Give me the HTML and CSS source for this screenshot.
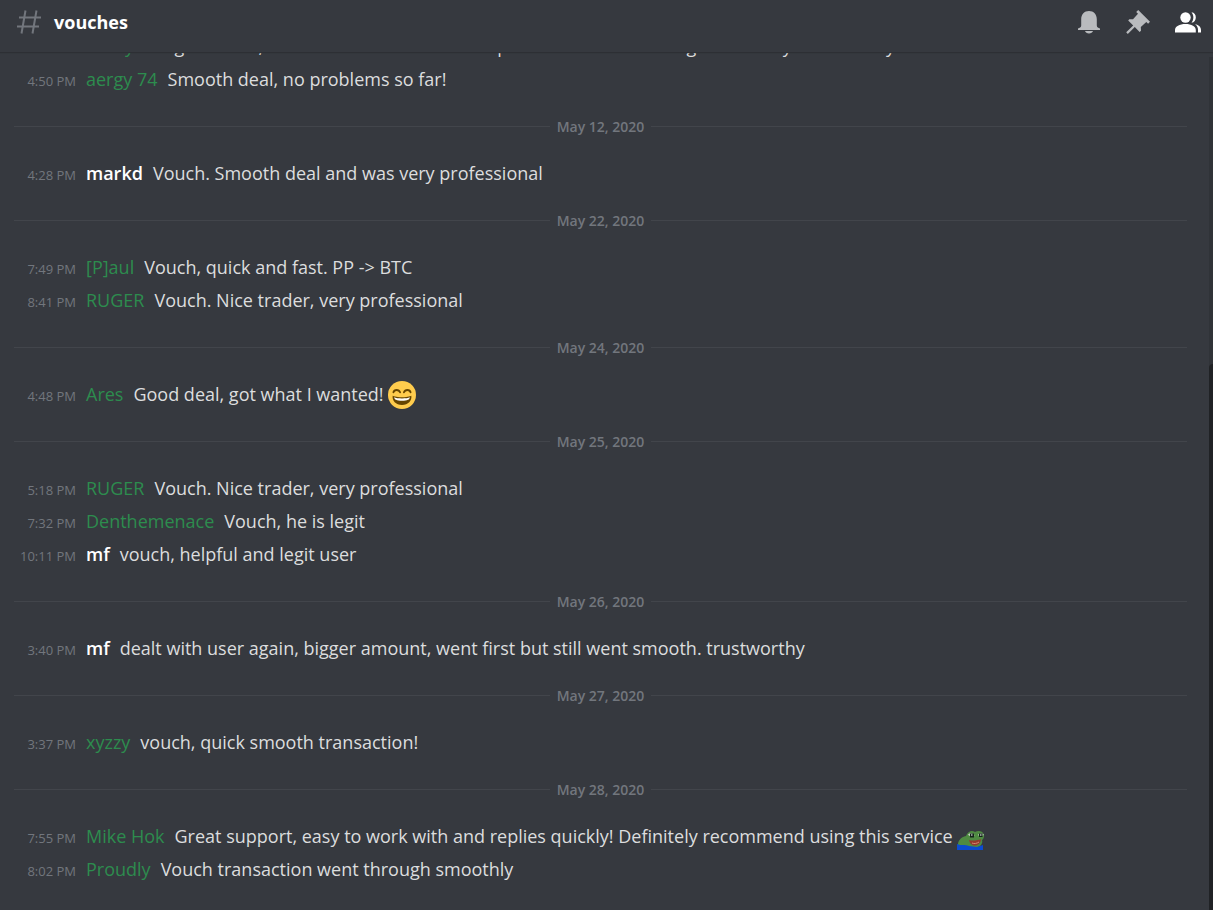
FILE: index.html
```html
<!DOCTYPE html>
<html lang="en">
<head>
<meta charset="utf-8">
<title>vouches</title>
<link rel="stylesheet" href="styles.css">
</head>
<body>
<header class="topbar">
  <svg class="hash" viewBox="0 0 26 26" aria-hidden="true"><path d="M9.5 1.5 5.5 24.500M20.500 1.500 16.500 24.500M3 8.500H25M1 17.500H23"/></svg>
  <h1 class="title">vouches</h1>
  <div class="tools">
    <button class="tool" type="button" aria-label="Notifications"><svg viewBox="0 0 24 24"><path d="M12 1C7.300 1 4.200 4.500 4.200 9.200V15.500C4.200 17.500 2.500 18 1 18.500V20H23V18.500C21.500 18 19.800 17.500 19.800 15.500V9.200C19.800 4.500 16.700 1 12 1ZM8 21C8.500 22.500 10 23.500 12 23.500S15.500 22.500 16 21Z"/></svg></button>
    <button class="tool" type="button" aria-label="Pinned messages"><svg viewBox="0 0 24 24"><path d="M12.200 0 10.200 2 12 3.800 7 9.300 3.300 9.200 2.200 10.400 7.200 15.500.2 22.200 1.800 23.900 8.800 17.100 13.600 22 15 20.700 14.800 17 20.300 12 22.100 13.800 24 11.800Z"/></svg></button>
    <button class="tool active" type="button" aria-label="Member list"><svg viewBox="0 0 26 24"><circle cx="10.500" cy="7.500" r="5.200"/><path d="M0 22.500V20C0 16.500 4.500 14 10.500 14S20.800 16.500 20.800 20V22.500ZM16.500 2.300C22.300 2.300 22.300 12.700 16.500 12.700C19 9.800 19 5.200 16.500 2.300ZM20 14C24 15 26 17 26 20V22.500H23V20C23 17.500 22 15.500 20 14Z"/></svg></button>
  </div>
</header>
<main class="chat">
  <div class="log">
    <article class="msg"><time class="time">4:46 PM</time><b class="name">Mattyson</b><p class="text">great deal, smooth transaction and so patient and was dealing with a very trustworthy</p></article>
    <article class="msg"><time class="time">4:50 PM</time><b class="name">aergy 74</b><p class="text">Smooth deal, no problems so far!</p></article>
    <div class="day">May 12, 2020</div>
    <article class="msg"><time class="time">4:28 PM</time><b class="name plain">markd</b><p class="text">Vouch. Smooth deal and was very professional</p></article>
    <div class="day">May 22, 2020</div>
    <article class="msg"><time class="time">7:49 PM</time><b class="name">[P]aul</b><p class="text">Vouch, quick and fast. PP -&gt; BTC</p></article>
    <article class="msg"><time class="time">8:41 PM</time><b class="name">RUGER</b><p class="text">Vouch. Nice trader, very professional</p></article>
    <div class="day">May 24, 2020</div>
    <article class="msg"><time class="time">4:48 PM</time><b class="name">Ares</b><p class="text">Good deal, got what I wanted!</p>
      <svg class="emoji" viewBox="0 0 36 36" role="img" aria-label="Grinning face"><circle cx="18" cy="18" r="18" fill="#ffcc4d"/><path d="M6 19C6 19 10 21 18 21S30 19 30 19C31 25 26 31 18 31S5 25 6 19Z" fill="#664500"/><path d="M8 21C11 23 25 23 28 21C28 24 25 25.500 18 25.500S8 24 8 21Z" fill="#fff"/><path d="M7 14.500C8 10.500 14 10.500 15.500 14.500M20.500 14.500C22 10.500 28 10.500 29 14.500" fill="none" stroke="#664500" stroke-width="2.400" stroke-linecap="round"/></svg></article>
    <div class="day">May 25, 2020</div>
    <article class="msg"><time class="time">5:18 PM</time><b class="name">RUGER</b><p class="text">Vouch. Nice trader, very professional</p></article>
    <article class="msg"><time class="time">7:32 PM</time><b class="name">Denthemenace</b><p class="text">Vouch, he is legit</p></article>
    <article class="msg"><time class="time">10:11 PM</time><b class="name plain">mf</b><p class="text">vouch, helpful and legit user</p></article>
    <div class="day">May 26, 2020</div>
    <article class="msg"><time class="time">3:40 PM</time><b class="name plain">mf</b><p class="text">dealt with user again, bigger amount, went first but still went smooth. trustworthy</p></article>
    <div class="day">May 27, 2020</div>
    <article class="msg"><time class="time">3:37 PM</time><b class="name">xyzzy</b><p class="text">vouch, quick smooth transaction!</p></article>
    <div class="day">May 28, 2020</div>
    <article class="msg"><time class="time">7:55 PM</time><b class="name">Mike Hok</b><p class="text">Great support, easy to work with and replies quickly! Definitely recommend using this service</p>
      <svg class="emoji" viewBox="0 0 28 28" role="img" aria-label="Smiling frog"><path d="M1 24C0 18 4 14 9 13C11 8 15 7 18 9C21 7 25 8 26 10C28 12 27 16 25 17C26 20 24 23 21 24Z" fill="#4f8a42"/><path d="M0 21C4 23 8 21 12 23L20 24 26 22V27H0Z" fill="#0b4bd0"/><path d="M11 11.500C13 9.500 17 10 17.500 12.500C16 14 13 14 11 11.500ZM21 12C22 10 26 10 27 12C25 13.500 22 13.500 21 12Z" fill="#c3cfc3"/><path d="M13 10.500H17V14.500H13ZM22 10.500H25.500V14H22Z" fill="#14251a"/><path d="M14 11.500H15.500V12.500H14ZM23 11.500H24.500V12.500H23Z" fill="#fff"/><path d="M12 17C15 18 21 17.500 24 16C24 20 21 22.500 18 22.500S13 21 12 17Z" fill="#963b2e"/><path d="M15 20C17 21 20 20.500 22 19" fill="none" stroke="#d88a74"/></svg></article>
    <article class="msg"><time class="time">8:02 PM</time><b class="name">Proudly</b><p class="text">Vouch transaction went through smoothly</p></article>
  </div>
  <div class="track"><div class="thumb"></div></div>
</main>
</body>
</html>
```
FILE: styles.css
```css
* { box-sizing: border-box; }
body {
  margin: 0;
  height: 100vh;
  display: flex;
  flex-direction: column;
  overflow: hidden;
  background: #36393f;
  color: #dcddde;
  font-family: "Open Sans", "Noto Sans", sans-serif;
}
.topbar {
  flex: none;
  display: flex;
  align-items: center;
  height: 52px;
  padding: 0 12px 9px 16px;
  box-shadow: 0 1px 1px #2d2f34;
  z-index: 1;
}
.hash { width: 26px; height: 26px; fill: none; stroke: #72767d; stroke-width: 2; }
.title { margin: 0 0 0 12px; font-size: 18px; line-height: 24px; font-weight: 700; color: #fff; }
.tools { display: flex; gap: 25px; margin-left: auto; }
.tool { padding: 0; border: 0; background: none; color: #b9bbbe; }
.tool svg { display: block; height: 24px; fill: currentColor; }
.tool.active { color: #fff; }
.chat { flex: 1; min-height: 0; display: flex; }
.log {
  flex: 1;
  min-width: 0;
  display: flex;
  flex-direction: column;
  justify-content: flex-end;
  overflow: hidden;
  padding: 0 22px 24px 14px;
}
.msg { flex: none; display: flex; align-items: baseline; height: 33px; line-height: 33px; font-size: 18px; white-space: nowrap; }
.time { width: 62px; margin-right: 10px; text-align: right; font-size: 13px; color: #72767d; }
.name { margin-right: 10px; font-weight: 400; color: #2d8c4e; }
.plain { font-weight: 600; color: #fff; }
.text { margin: 0; }
.emoji { width: 28px; height: 28px; margin-left: 4px; align-self: center; }
.day {
  flex: none;
  display: flex;
  align-items: center;
  gap: 7px;
  height: 61px;
  font-size: 14px;
  font-weight: 600;
  color: #72767d;
}
.day::before, .day::after { content: ""; flex: 1; height: 1px; background: #42454b; }
.track { width: 4px; margin-top: 5px; display: flex; flex-direction: column; justify-content: flex-end; background: #303338; }
.thumb { height: 64%; background: #202225; border-radius: 4px 0 0 0; }
```
